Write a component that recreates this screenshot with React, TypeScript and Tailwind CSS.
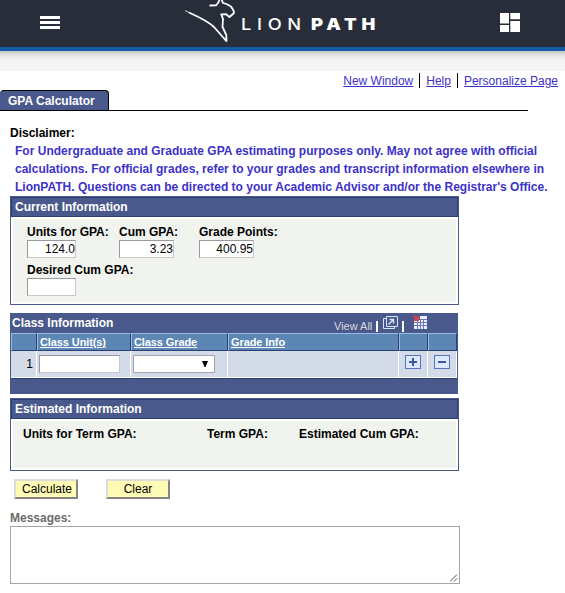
import type { ReactNode } from "react";

function MenuIcon() {
  return (
    <svg width="20" height="14" viewBox="0 0 20 14" fill="#fff" shapeRendering="crispEdges">
      <path d="M0 0h20v3H0zM0 5h20v3H0zM0 10h20v3H0z" />
    </svg>
  );
}

function TilesIcon() {
  return (
    <svg width="20" height="19" viewBox="0 0 20 19" fill="#fff">
      <path d="M0 0h9v10.5H0zM10.3 0H20v6.3h-9.7zM0 12h9v7H0zM10.3 8H20v11h-9.7z" />
    </svg>
  );
}

function Logo() {
  return (
    <div className="flex h-[47px] items-start">
      <svg width="52" height="43" viewBox="0 0 52 43" fill="none" stroke="#fff" strokeLinejoin="round">
        <path d="M0 10.5L4 12.5" stroke="#aeb2ba" strokeWidth="1.2" />
        <path d="M4 12.5C14 17 23 21 29 27L40 39.5L41.5 41L41.3 35L37.5 27L38 19L36.3 14.3L41 14.2L44.5 17L49 13L48.5 10.5L46 6.5L41.5 4L38 3L36.8 0M34.5 0L33 3L31 5.3L24.5 5.5" strokeWidth="1.8" />
      </svg>
      <div className="ml-[4px] mt-[13px] flex whitespace-nowrap font-['Inter',sans-serif] text-[16px] leading-[23px] text-white">
        <span className="w-[70px] origin-left scale-x-[1.14] font-medium tracking-[5px]">LION</span>
        <span className="origin-left scale-x-[1.15] font-black tracking-[4.2px]">PATH</span>
      </div>
    </div>
  );
}

function Panel({ title, height, children }: { title: string; height: string; children: ReactNode }) {
  return (
    <section className={`flex w-[449px] flex-col border border-[#4b5a8b] ${height}`}>
      <h2 className="h-5 shrink-0 border border-[#2a3f73] bg-[#4a598b] pl-[3px] font-bold leading-[19px] text-white">{title}</h2>
      <div className="m-[2px] flex-1 bg-[#f1f3ee]">{children}</div>
    </section>
  );
}

function Field({ label, value, width, inputWidth }: { label: string; value: string; width: string; inputWidth: string }) {
  return (
    <div className={width}>
      <div className="whitespace-nowrap font-bold leading-[14px]">{label}</div>
      <div className={`mt-px h-[18px] border border-[#c8c8c8] border-l-[#999] border-t-[#999] bg-white text-right leading-[17px] ${inputWidth}`}>{value}</div>
    </div>
  );
}

function PopupIcon() {
  return (
    <svg width="16" height="13" viewBox="0 0 16 13" fill="none" stroke="#dbe4ff">
      <path d="M3.5 2.5h-3v10h11v-2M3.5 .5h11v10h-11z" />
      <path d="M5.5 8.5L10 4M6.5 3.5h4v4" strokeWidth="1.4" />
    </svg>
  );
}

function GridIcon() {
  return (
    <svg width="15" height="14" viewBox="0 0 15 14">
      <g shapeRendering="crispEdges">
        <path d="M1 5h13v9H1zM7 1h7v4H7z" fill="#e8edff" />
        <path d="M7 4.5h7M1 7.5h13M1 10.5h13M4.5 5v9M7.5 5v9M10.5 5v9" stroke="#6a78b4" />
      </g>
      <path d="M.5 .5L4 4" stroke="#e04048" strokeWidth="1.8" />
      <path d="M6 0v6H0z" fill="#e04048" />
    </svg>
  );
}

function StepIcon({ plus }: { plus?: boolean }) {
  return (
    <svg width="16" height="14" viewBox="0 0 16 14" shapeRendering="crispEdges">
      <path d="M.5 .5h15v13H.5z" fill="#dce8ff" stroke="#5c74bc" />
      <path d={plus ? "M4 6h8v2H4zM7 3h2v8H7z" : "M4 6h8v2H4z"} fill="#4056a0" />
    </svg>
  );
}

function Head({ children }: { children?: ReactNode }) {
  return (
    <div className="border border-b-[#2a3f73] border-l-[#9cbbe0] border-r-[#2a3f73] border-t-[#9cbbe0] bg-[#5c86b4] pl-[2px] text-[11px] font-bold leading-4 tracking-[-0.1px] text-white underline">
      {children}
    </div>
  );
}

function Cell({ children, className = "" }: { children?: ReactNode; className?: string }) {
  return <div className={`border-b border-r border-white bg-[#d4dbe8] ${className}`}>{children}</div>;
}

export default function App() {
  const button =
    "h-5 w-16 border-2 border-b-[#858585] border-l-[#ddd] border-r-[#858585] border-t-[#ddd] bg-[#fffbb5] text-center leading-[15px]";
  return (
    <div className="h-[593px] w-[565px] overflow-hidden bg-white font-['Liberation_Sans',Arial,sans-serif] text-[12px] text-black">
      <header className="flex h-[51px] border-b-4 border-[#135ca8] bg-[#282d3a]">
        <div className="w-[185px] pl-10 pt-4"><MenuIcon /></div>
        <div className="w-[315px]"><Logo /></div>
        <div className="pt-[13px]"><TilesIcon /></div>
      </header>
      <div className="h-5 bg-[#f4f4f4] bg-linear-to-b from-[#c5c5c5] via-[#e4e4e4] via-20% to-[#f4f4f4] to-45%" />
      <nav className="flex h-[19px] justify-end pr-[7px] pt-[2px] leading-[17px] text-[#3c32c8]">
        <a className="underline">New Window</a>
        <span className="mx-[6px] h-[15px] w-px bg-black" />
        <a className="underline">Help</a>
        <span className="mx-[6px] h-[15px] w-px bg-black" />
        <a className="underline">Personalize Page</a>
      </nav>
      <div className="flex h-[21px] w-[528px] border-b border-black">
        <div className="w-[109px] rounded-t-[4px] border-r border-t border-black bg-[#4a598b] pl-2 font-bold leading-[20px] text-white">GPA Calculator</div>
      </div>

      <main className="pl-[10px]">
        <div className="pt-[15px] font-bold leading-[14px]">Disclaimer:</div>
        <div className="h-[56px] whitespace-nowrap pl-[5px] pt-[2px] font-bold leading-[18px] tracking-[0.01px] text-[#3c32c8]">
          <p>For Undergraduate and Graduate GPA estimating purposes only. May not agree with official</p>
          <p>calculations. For official grades, refer to your grades and transcript information elsewhere in</p>
          <p>LionPATH. Questions can be directed to your Academic Advisor and/or the Registrar's Office.</p>
        </div>

        <Panel title="Current Information" height="h-[109px]">
          <div className="flex pl-[14px] pt-[6px]">
            <Field label="Units for GPA:" value="124.0" width="w-[92px]" inputWidth="w-[49px]" />
            <Field label="Cum GPA:" value="3.23" width="w-[80px]" inputWidth="w-[55px]" />
            <Field label="Grade Points:" value="400.95" width="w-[90px]" inputWidth="w-[55px]" />
          </div>
          <div className="pl-[14px] pt-[5px]">
            <Field label="Desired Cum GPA:" value="" width="w-[120px]" inputWidth="w-[49px]" />
          </div>
        </Panel>

        <section className="mt-2 h-[81px] w-[448px] bg-[#4a598b] px-px">
          <div className="flex h-5 pl-px text-white">
            <h2 className="w-[322px] font-bold leading-[20px]">Class Information</h2>
            <span className="w-[42px] whitespace-nowrap pt-[5px] text-[11px] leading-[16px] text-[#d8d8d8]">View All</span>
            <span className="mt-[8px] h-[11px] w-[2px] bg-white" />
            <span className="ml-[5px] mt-[3px]"><PopupIcon /></span>
            <span className="ml-[3px] mt-[8px] h-[11px] w-[2px] bg-white" />
            <span className="ml-[9px] mt-[2px]"><GridIcon /></span>
          </div>
          <div className="grid grid-cols-[26px_94px_97px_171px_29px_29px] grid-rows-[18px_27px] border-b border-[#2a3f73]">
            <Head />
            <Head>Class Unit(s)</Head>
            <Head>Class Grade</Head>
            <Head>Grade Info</Head>
            <Head />
            <Head />
            <Cell className="pr-[3px] text-right leading-[26px]">1</Cell>
            <Cell className="pl-[2px] pt-1">
              <div className="h-[18px] w-[81px] border border-[#c8c8c8] border-l-[#999] border-t-[#999] bg-white" />
            </Cell>
            <Cell className="pl-[2px] pt-1">
              <div className="flex h-[18px] w-[82px] items-center justify-end border border-[#a5a5a5] bg-white pr-[6px]">
                <svg width="6" height="6" viewBox="0 0 6 6"><path d="M0 0h6L3.5 6h-1z" /></svg>
              </div>
            </Cell>
            <Cell />
            <Cell className="pl-[6px] pt-1"><StepIcon plus /></Cell>
            <Cell className="pl-[6px] pt-1"><StepIcon /></Cell>
          </div>
        </section>

        <div className="mt-1">
          <Panel title="Estimated Information" height="h-[73px]">
            <div className="flex whitespace-nowrap pl-[10px] pt-[6px] font-bold leading-[14px]">
              <span className="w-[184px]">Units for Term GPA:</span>
              <span className="w-[92px]">Term GPA:</span>
              <span>Estimated Cum GPA:</span>
            </div>
          </Panel>
        </div>

        <div className="mt-2 flex gap-7 pl-1">
          <button className={`${button} pl-[2px]`}>Calculate</button>
          <button className={button}>Clear</button>
        </div>
        <div className="mt-3 h-[15px] font-bold leading-[14px] text-[#6b6b6b]">Messages:</div>
        <div className="flex h-[58px] w-[450px] items-end justify-end border border-[#a5a5a5] p-px">
          <svg width="8" height="8" viewBox="0 0 8 8" stroke="#555"><path d="M0 7.5L7 .5M4 7.5L7 4.5" /></svg>
        </div>
      </main>
    </div>
  );
}
